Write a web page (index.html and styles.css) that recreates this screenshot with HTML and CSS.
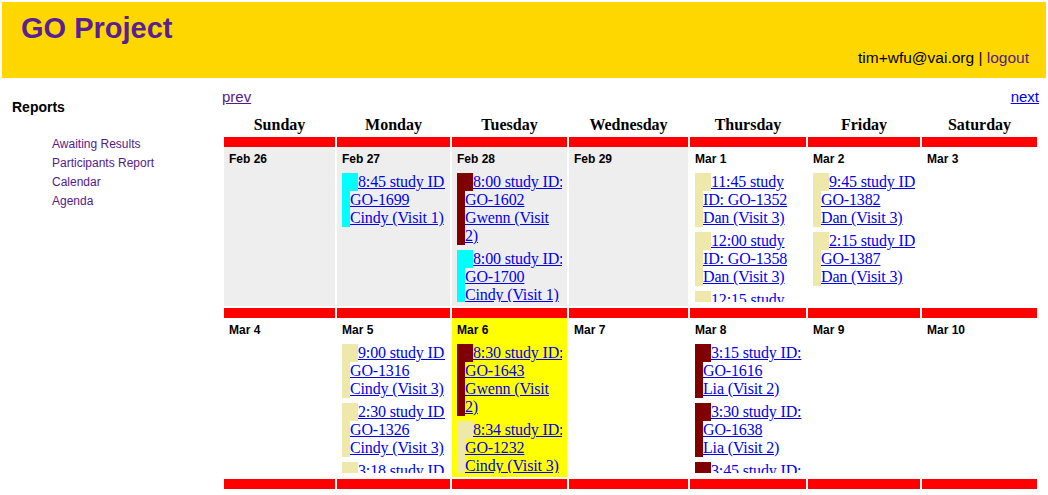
FILE: index.html
```html
<!DOCTYPE html>
<html lang="en">
<head>
<meta charset="utf-8">
<title>GO Project – Calendar</title>
<link rel="stylesheet" href="styles.css">
</head>
<body>
<div class="page">
  <header class="masthead">
    <h1 class="title">GO Project</h1>
    <div class="userbar">tim+wfu@vai.org | <a href="#">logout</a></div>
  </header>

  <div class="main">
    <nav class="sidebar">
      <h2 class="side-title">Reports</h2>
      <ul class="side-links">
        <li><a href="#">Awaiting Results</a></li>
        <li><a href="#">Participants Report</a></li>
        <li><a href="#">Calendar</a></li>
        <li><a href="#">Agenda</a></li>
      </ul>
    </nav>

    <section class="calendar">
      <div class="cal-nav">
        <a class="prev" href="#">prev</a>
        <a class="next" href="#">next</a>
      </div>
      <table class="cal">
        <colgroup>
          <col class="c-sun"><col class="c-mon"><col class="c-tue"><col class="c-wed"><col class="c-thu"><col class="c-fri"><col class="c-sat">
        </colgroup>
        <thead>
          <tr>
            <th>Sunday</th><th>Monday</th><th>Tuesday</th><th>Wednesday</th><th>Thursday</th><th>Friday</th><th>Saturday</th>
          </tr>
        </thead>
        <tbody>
          <tr>
            <td class="other"><div class="day-num">Feb 26</div><div class="events"></div></td>
            <td class="other"><div class="day-num">Feb 27</div>
              <div class="events">
                <div class="ev ev-cyan"><span class="sw"></span><a href="#">8:45 study ID:<br>GO-1699<br>Cindy (Visit 1)</a></div>
              </div>
            </td>
            <td class="other"><div class="day-num">Feb 28</div>
              <div class="events">
                <div class="ev ev-maroon"><span class="sw"></span><a href="#">8:00 study ID:<br>GO-1602<br>Gwenn (Visit<br>2)</a></div>
                <div class="ev ev-cyan"><span class="sw"></span><a href="#">8:00 study ID:<br>GO-1700<br>Cindy (Visit 1)</a></div>
              </div>
            </td>
            <td class="other"><div class="day-num">Feb 29</div><div class="events"></div></td>
            <td><div class="day-num">Mar 1</div>
              <div class="events">
                <div class="ev ev-beige"><span class="sw"></span><a href="#">11:45 study<br>ID: GO-1352<br>Dan (Visit 3)</a></div>
                <div class="ev ev-beige"><span class="sw"></span><a href="#">12:00 study<br>ID: GO-1358<br>Dan (Visit 3)</a></div>
                <div class="ev ev-beige"><span class="sw"></span><a href="#">12:15 study<br>ID: GO-1361<br>Dan (Visit 3)</a></div>
              </div>
            </td>
            <td><div class="day-num">Mar 2</div>
              <div class="events">
                <div class="ev ev-beige"><span class="sw"></span><a href="#">9:45 study ID:<br>GO-1382<br>Dan (Visit 3)</a></div>
                <div class="ev ev-beige"><span class="sw"></span><a href="#">2:15 study ID:<br>GO-1387<br>Dan (Visit 3)</a></div>
              </div>
            </td>
            <td><div class="day-num">Mar 3</div><div class="events"></div></td>
          </tr>
          <tr>
            <td><div class="day-num">Mar 4</div><div class="events"></div></td>
            <td><div class="day-num">Mar 5</div>
              <div class="events">
                <div class="ev ev-beige"><span class="sw"></span><a href="#">9:00 study ID:<br>GO-1316<br>Cindy (Visit 3)</a></div>
                <div class="ev ev-beige"><span class="sw"></span><a href="#">2:30 study ID:<br>GO-1326<br>Cindy (Visit 3)</a></div>
                <div class="ev ev-beige"><span class="sw"></span><a href="#">3:18 study ID:<br>GO-1330<br>Cindy (Visit 3)</a></div>
              </div>
            </td>
            <td class="today"><div class="day-num">Mar 6</div>
              <div class="events">
                <div class="ev ev-maroon"><span class="sw"></span><a href="#">8:30 study ID:<br>GO-1643<br>Gwenn (Visit<br>2)</a></div>
                <div class="ev ev-beige"><span class="sw"></span><a href="#">8:34 study ID:<br>GO-1232<br>Cindy (Visit 3)</a></div>
              </div>
            </td>
            <td><div class="day-num">Mar 7</div><div class="events"></div></td>
            <td><div class="day-num">Mar 8</div>
              <div class="events wide">
                <div class="ev ev-maroon"><span class="sw"></span><a href="#">3:15 study ID:<br>GO-1616<br>Lia (Visit 2)</a></div>
                <div class="ev ev-maroon"><span class="sw"></span><a href="#">3:30 study ID:<br>GO-1638<br>Lia (Visit 2)</a></div>
                <div class="ev ev-maroon"><span class="sw"></span><a href="#">3:45 study ID:<br>GO-1640<br>Lia (Visit 2)</a></div>
              </div>
            </td>
            <td><div class="day-num">Mar 9</div><div class="events"></div></td>
            <td><div class="day-num">Mar 10</div><div class="events"></div></td>
          </tr>
          <tr>
            <td><div class="day-num">Mar 11</div><div class="events"></div></td>
            <td><div class="day-num">Mar 12</div><div class="events"></div></td>
            <td><div class="day-num">Mar 13</div><div class="events"></div></td>
            <td><div class="day-num">Mar 14</div><div class="events"></div></td>
            <td><div class="day-num">Mar 15</div><div class="events"></div></td>
            <td><div class="day-num">Mar 16</div><div class="events"></div></td>
            <td><div class="day-num">Mar 17</div><div class="events"></div></td>
          </tr>
        </tbody>
      </table>
    </section>
  </div>
</div>
</body>
</html>
```

FILE: styles.css
```css
html, body {
  margin: 0;
  overflow: hidden;
}

body {
  font-family: "Liberation Sans", Arial, sans-serif;
  color: #000;
  background: #fff;
}

.page {
  padding: 2px;
}

/* Masthead */
.masthead {
  background: #ffd700;
  height: 76px;
  box-sizing: border-box;
  padding: 10px 17px 0 19px;
}

.title {
  margin: 0;
  font-size: 29px;
  line-height: 33px;
  font-weight: bold;
  color: #5a1e96;
}

.userbar {
  margin-top: 4px;
  text-align: right;
  font-size: 15.5px;
  line-height: 18px;
}

.userbar a {
  color: #551a8b;
  text-decoration: none;
}

/* Main layout */
.main {
  display: flex;
  align-items: flex-start;
}

.sidebar {
  width: 220px;
  flex: none;
  box-sizing: border-box;
  padding: 21px 0 0 10px;
}

.side-title {
  margin: 0;
  font-size: 14px;
  line-height: 17px;
  font-weight: bold;
}

.side-links {
  list-style: none;
  margin: 19px 0 0;
  padding: 0 0 0 40px;
  font-size: 12px;
  line-height: 19px;
}

.side-links a {
  color: #551a8b;
  text-decoration: none;
}

/* Calendar */
.calendar {
  width: 817px;
  flex: none;
  padding-top: 10px;
}

.cal-nav {
  display: flex;
  justify-content: space-between;
  font-size: 15px;
  line-height: 18px;
  margin-bottom: 7px;
}

.cal-nav .prev { color: #551a8b; }
.cal-nav .next { color: #0000ee; }

.cal {
  width: 817px;
  table-layout: fixed;
  border-collapse: separate;
  border-spacing: 2px;
  margin: 0;
}

.c-sun { width: 111px; }
.c-mon { width: 113px; }
.c-tue { width: 115px; }
.c-wed { width: 119px; }
.c-thu { width: 116px; }
.c-fri { width: 112px; }
.c-sat { width: 115px; }

.cal th {
  font-family: "Liberation Serif", "Times New Roman", serif;
  font-size: 16px;
  line-height: 18px;
  font-weight: bold;
  padding: 1px 0;
  text-align: center;
}

.cal td {
  vertical-align: top;
  border-top: 10px solid #ff0000;
  padding: 5px 0 4px 5px;
  background: #fff;
}

.cal td.other { background: #eeeeee; }
.cal td.today { background: #ffff00; }

.day-num {
  font-size: 12px;
  line-height: 14px;
  height: 14px;
  font-weight: bold;
  margin-bottom: 7px;
  white-space: nowrap;
}

.events {
  height: 129px;
  overflow: hidden;
  margin-right: 5px;
  white-space: nowrap;
  font-family: "Liberation Serif", "Times New Roman", serif;
  font-size: 16px;
  line-height: 18px;
  letter-spacing: -0.15px;
}

.events.wide {
  margin-right: 3px;
}

.ev {
  border-left: 8px solid transparent;
  margin-bottom: 5px;
}

.ev .sw {
  display: inline-block;
  width: 8px;
  height: 18px;
  vertical-align: top;
}

.ev a {
  color: #0000ee;
  text-decoration: underline;
}

.ev-cyan { border-left-color: #00ffff; }
.ev-cyan .sw { background: #00ffff; }

.ev-maroon { border-left-color: #800000; }
.ev-maroon .sw { background: #800000; }

.ev-beige { border-left-color: #eee8aa; }
.ev-beige .sw { background: #eee8aa; }
```
